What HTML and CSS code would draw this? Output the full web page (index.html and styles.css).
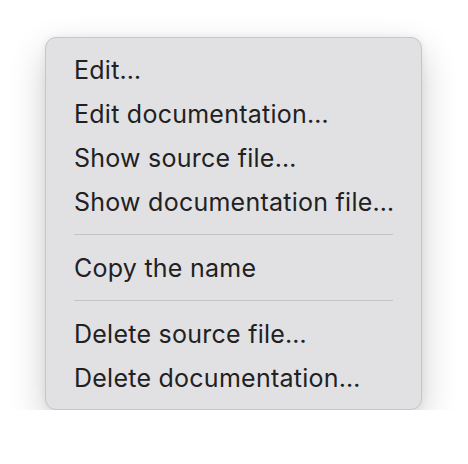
FILE: index.html
```html
<!DOCTYPE html>
<html>
<head>
<meta charset="utf-8">
<link rel="stylesheet" href="styles.css">
</head>
<body>
<div class="menu">
  <div class="item">Edit…</div>
  <div class="item">Edit documentation…</div>
  <div class="item">Show source file…</div>
  <div class="item">Show documentation file…</div>
  <div class="sep"></div>
  <div class="item">Copy the name</div>
  <div class="sep"></div>
  <div class="item">Delete source file…</div>
  <div class="item">Delete documentation…</div>
</div>
</body>
</html>
```
FILE: styles.css
```css
html, body {
  margin: 0;
  background: #ffffff;
}
body {
  padding: 37px 0 0 45px;
  font-family: Inter, "Noto Sans", sans-serif;
}
.menu {
  box-sizing: border-box;
  width: 377px;
  height: 373px;
  background: #e1e1e4;
  border: 1px solid #c6c6c8;
  border-radius: 11px;
  box-shadow: 0 14px 36px rgba(0, 0, 0, 0.2), 0 0 8px rgba(0, 0, 0, 0.06);
  padding: 10px 28px 0 28px;
}
.item {
  height: 44px;
  line-height: 44px;
  font-size: 25px;
  letter-spacing: 0.25px;
  color: #212123;
  white-space: nowrap;
}
.sep {
  height: 1px;
  background: #c4c4c7;
  margin: 10px 0 11px 0;
}
```
